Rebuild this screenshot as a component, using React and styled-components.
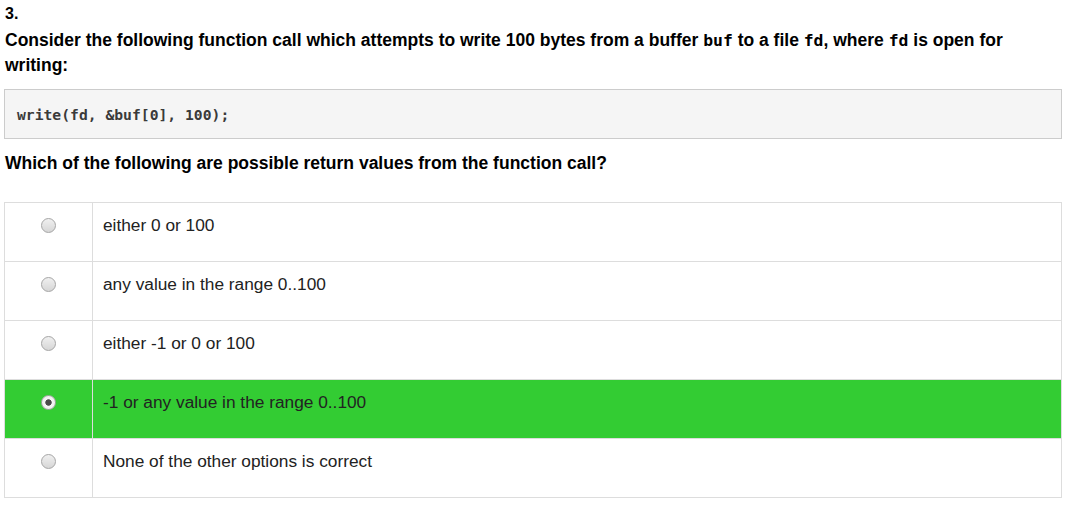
import React from 'react';
import styled, { createGlobalStyle } from 'styled-components';

const Global = createGlobalStyle`
  body {
    margin: 0;
    background: #fff;
    font-family: 'Liberation Sans', Arial, sans-serif;
    color: #000;
  }
`;

const Page = styled.div`
  padding: 0 12px 0 4px;
`;

const Number = styled.div`
  font-weight: bold;
  font-size: 16px;
  line-height: 20px;
  padding-top: 4px;
  padding-left: 1px;
`;

const Prompt = styled.p`
  margin: 4px 0 0;
  padding-left: 1px;
  font-weight: bold;
  font-size: 17.5px;
  line-height: 25px;
`;

const Inline = styled.code`
  font-family: 'DejaVu Sans Mono', monospace;
  font-size: 16.4px;
  line-height: 1;
`;

const CodeBlock = styled.pre`
  margin: 11px 0 0;
  background: #f5f5f5;
  border: 1px solid #cccccc;
  padding: 15px 12px 14px;
  font-family: 'DejaVu Sans Mono', 'Liberation Mono', monospace;
  font-size: 14.7px;
  font-weight: bold;
  line-height: 19px;
  color: #3a3a3a;
`;

const Question = styled.p`
  margin: 13px 0 0;
  padding-left: 1px;
  font-weight: bold;
  font-size: 17.5px;
  line-height: 22px;
`;

const Options = styled.div`
  margin-top: 28px;
  border: 1px solid #dddddd;
  border-bottom: none;
`;

const Row = styled.div`
  display: flex;
  height: 58px;
  border-bottom: 1px solid #dddddd;
  background: ${p => (p.$selected ? '#33cc33' : '#fff')};
`;

const RadioCell = styled.div`
  width: 87px;
  flex: none;
  border-right: 1px solid #dddddd;
  display: flex;
  justify-content: center;
  align-items: flex-start;
  padding-top: 15px;
`;

const TextCell = styled.div`
  flex: 1;
  padding: 11px 10px 0;
  font-size: 17.3px;
  line-height: 22px;
  color: #222;
`;

const Radio = styled.span`
  width: 13px;
  height: 13px;
  border-radius: 50%;
  border: 1px solid #a5a5a5;
  background: ${p =>
    p.$checked
      ? 'radial-gradient(circle, #4a4a4a 0, #4a4a4a 2.8px, #f6f6f6 3.6px, #e4e4e4 100%)'
      : 'linear-gradient(#f0f0f0, #d6d6d6)'};
`;

const options = [
  'either 0 or 100',
  'any value in the range 0..100',
  'either -1 or 0 or 100',
  '-1 or any value in the range 0..100',
  'None of the other options is correct',
];

export default function App() {
  return (
    <Page>
      <Global />
      <Number>3.</Number>
      <Prompt>
        Consider the following function call which attempts to write 100 bytes from a buffer{' '}
        <Inline>buf</Inline> to a file <Inline>fd</Inline>, where <Inline>fd</Inline> is open for
        writing:
      </Prompt>
      <CodeBlock>write(fd, &amp;buf[0], 100);</CodeBlock>
      <Question>Which of the following are possible return values from the function call?</Question>
      <Options>
        {options.map((o, i) => (
          <Row key={o} $selected={i === 3}>
            <RadioCell>
              <Radio $checked={i === 3} />
            </RadioCell>
            <TextCell>{o}</TextCell>
          </Row>
        ))}
      </Options>
    </Page>
  );
}
